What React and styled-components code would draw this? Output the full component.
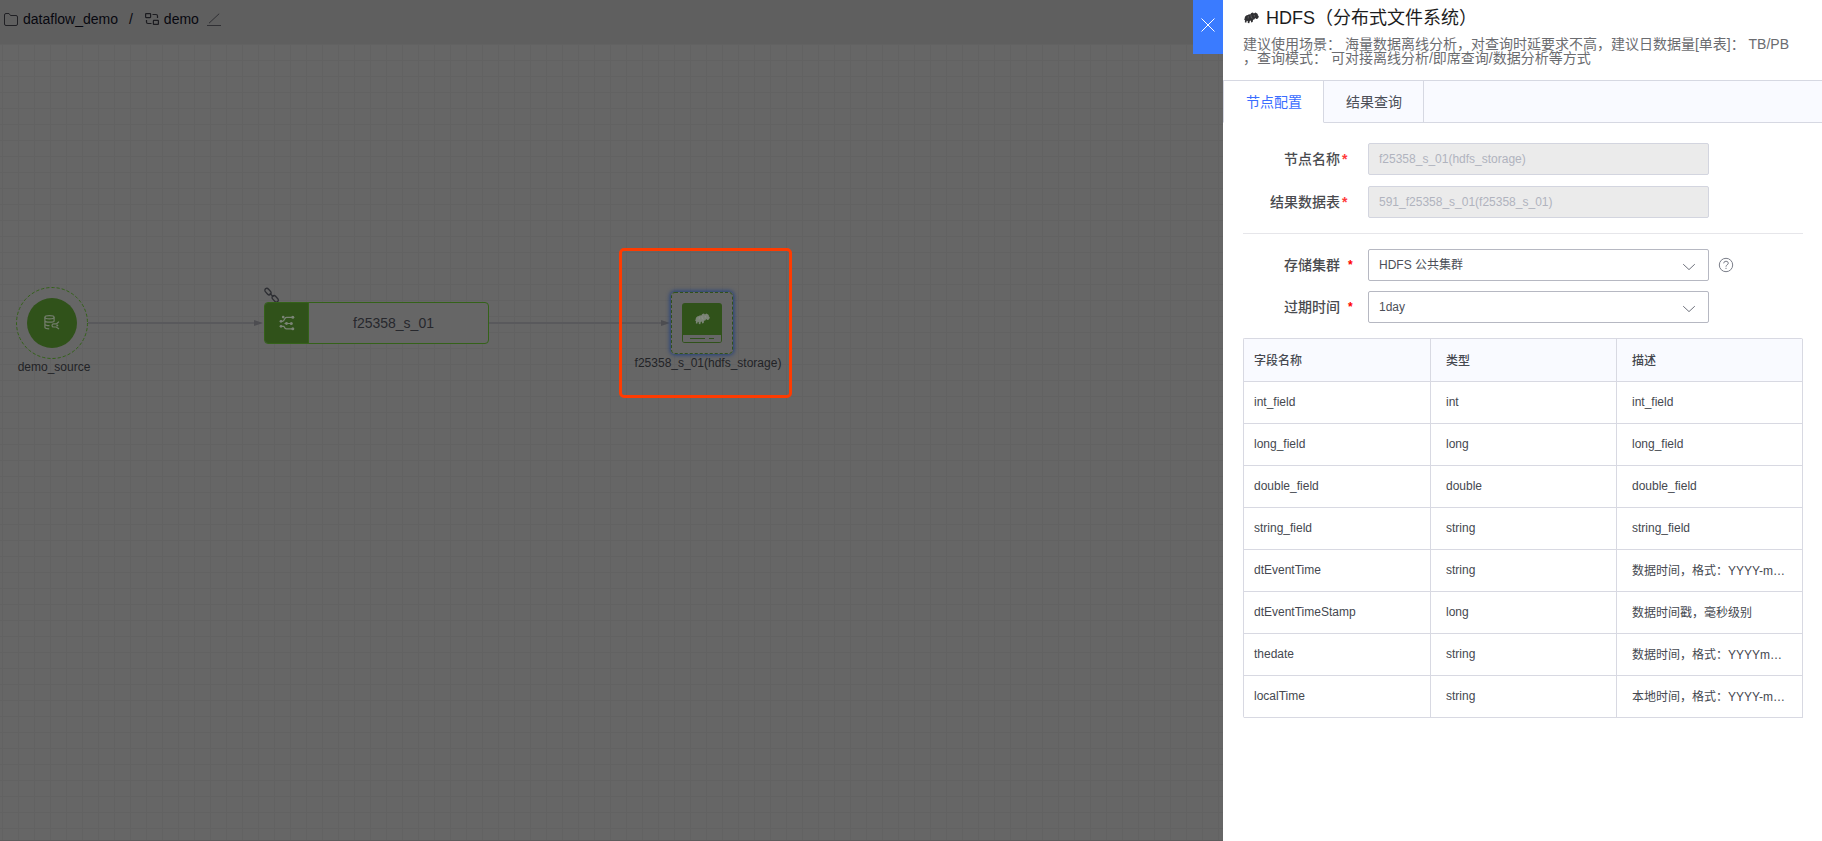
import React from "react";
import styled, { createGlobalStyle } from "styled-components";

const GlobalStyle = createGlobalStyle`
  * { box-sizing: border-box; }
  html, body { margin: 0; padding: 0; }
  body {
    width: 100vw;
    height: 100vh;
    overflow: hidden;
    font-family: "Liberation Sans", "Noto Sans CJK SC", sans-serif;
  }
`;

const Page = styled.div`
  display: flex;
  width: 100vw;
  height: 100vh;
  overflow: hidden;
`;

const Workspace = styled.main`
  flex: 1;
  min-width: 0;
  display: flex;
  flex-direction: column;
  position: relative;
  background: #666;
`;

const TopBar = styled.header`
  height: 44px;
  flex: none;
  display: flex;
  align-items: center;
  padding: 0 0 6px 4px;
  background: #5f5f5f;
  color: #08080f;
  font-size: 14px;
`;

const Crumb = styled.span`
  display: flex;
  align-items: center;
  gap: 5px;
`;

const Slash = styled.span`
  margin: 0 12px 0 11px;
`;

const EditButton = styled.span`
  display: flex;
  margin-left: 8px;
`;

const Canvas = styled.div`
  flex: 1;
  position: relative;
  background-color: #666;
  background-image: linear-gradient(to right, #626262 1px, transparent 1px),
    linear-gradient(to bottom, #626262 1px, transparent 1px);
  background-size: 16px 16px;
  background-position: 2px 0;
  border-bottom: 1px solid #5c5c5c;
`;

const Links = styled.svg`
  position: absolute;
  left: 0;
  top: 0;
`;

const NodeAt = styled.div`
  position: absolute;
  left: ${(p) => p.$x}px;
  top: ${(p) => p.$y}px;
`;

const NodeLabel = styled.div`
  position: absolute;
  top: ${(p) => p.$top}px;
  left: 50%;
  transform: translateX(calc(-50% + ${(p) => p.$shift}px));
  white-space: nowrap;
  font-size: 12px;
  line-height: 16px;
  color: #222326;
`;

const ProcessNode = styled.div`
  display: flex;
  width: 225px;
  height: 42px;
  border: 1px solid #346219;
  border-radius: 4px;
  background: #666;
  overflow: hidden;
`;

const ProcessIcon = styled.div`
  width: 44px;
  display: flex;
  align-items: center;
  justify-content: center;
  background: #30521a;
  border-right: 1px solid #346219;
`;

const ProcessName = styled.div`
  flex: 1;
  padding-right: 10px;
  text-align: center;
  font-size: 14px;
  line-height: 41px;
  color: #27282d;
`;

const StorageNode = styled.div`
  width: 62px;
  height: 62px;
  display: flex;
  border-radius: 4px;
  background: #666;
  box-shadow: 0 0 4px 1px #1d3d7c;
`;

const Highlight = styled.div`
  position: absolute;
  left: 619px;
  top: 204px;
  width: 173px;
  height: 150px;
  border: 3px solid #ff3b00;
  border-radius: 5px;
`;

const CloseButton = styled.button`
  position: absolute;
  right: 0;
  top: 0;
  width: 30px;
  height: 54px;
  padding: 0 0 4px;
  border: 0;
  display: flex;
  align-items: center;
  justify-content: center;
  background: #3a7bff;
  z-index: 2;
`;

const Panel = styled.aside`
  width: 599px;
  flex: none;
  display: flex;
  flex-direction: column;
  background: #fff;
`;

const PanelHead = styled.div`
  height: 80px;
  padding: 5px 20px 0 21px;
`;

const Title = styled.h1`
  display: flex;
  align-items: center;
  gap: 7px;
  margin: 0;
  height: 26px;
  font-size: 18px;
  font-weight: 400;
  line-height: 26px;
  color: #1c1c1c;
`;

const Description = styled.p`
  margin: 6px 0 0 -1px;
  font-size: 14px;
  line-height: 14px;
  white-space: nowrap;
  color: #6b6c70;
`;

const Tabs = styled.div`
  display: flex;
  height: 43px;
  border-top: 1px solid #d6d8e2;
  background: #f9faff;
`;

const Tab = styled.div`
  width: ${(p) => (p.$active ? 101 : 100)}px;
  display: flex;
  align-items: center;
  padding: 0 0 2px 22px;
  border-left: ${(p) => (p.$active ? "1px solid #d6d8e2" : "0")};
  border-right: 1px solid #d6d8e2;
  border-bottom: 1px solid ${(p) => (p.$active ? "#fff" : "#d6d8e2")};
  background: ${(p) => (p.$active ? "#fff" : "#f9faff")};
  color: ${(p) => (p.$active ? "#3a6dff" : "#4c4f58")};
  font-size: 14px;
`;

const TabFill = styled.div`
  flex: 1;
  border-bottom: 1px solid #d6d8e2;
`;

const Form = styled.section`
  display: flex;
  flex-direction: column;
  gap: ${(p) => p.$gap}px;
  margin: 0 19px 0 20px;
  padding: ${(p) => p.$pad};
  border-bottom: ${(p) => (p.$ruled ? "1px solid #e6e6ea" : "0")};
`;

const Row = styled.div`
  display: flex;
  align-items: center;
  height: 32px;
`;

const Label = styled.label`
  width: 97px;
  flex: none;
  text-align: right;
  font-size: 14px;
  font-weight: 500;
  line-height: 20px;
  margin-top: -1px;
  color: #4a4b4f;
`;

const Star = styled.span`
  width: 28px;
  padding-left: ${(p) => (p.$wide ? 8 : 2)}px;
  flex: none;
  font-size: ${(p) => (p.$wide ? 12 : 14)}px;
  line-height: 16px;
  font-weight: 700;
  color: ${(p) => (p.$wide ? "#f00" : "#ff3a3a")};
`;

const Field = styled.div`
  width: 341px;
  height: 32px;
  display: flex;
  align-items: center;
  justify-content: space-between;
  padding: 0 12px 0 10px;
  border: 1px solid ${(p) => (p.$disabled ? "#d3d5df" : "#b6b8c2")};
  border-radius: 2px;
  background: ${(p) => (p.$disabled ? "#ebebeb" : "#fff")};
  color: ${(p) => (p.$disabled ? "#b0b3be" : "#4c4f58")};
  font-size: 12px;
  line-height: 16px;
`;

const ChevronIcon = styled.svg`
  margin-top: 4px;
`;

const HelpIcon = styled.svg`
  margin-left: 9px;
`;

const Table = styled.div`
  display: grid;
  grid-template-columns: 187px 186px 186px;
  grid-template-rows: 43px repeat(8, 42px);
  width: 560px;
  margin: 15px 0 0 20px;
  border-top: 1px solid #d8d9e2;
  border-left: 1px solid #d8d9e2;
  border-radius: 2px;
`;

const Cell = styled.div`
  min-width: 0;
  display: flex;
  align-items: center;
  padding: 0 15px 2px ${(p) => (p.$first ? 10 : 15)}px;
  border-right: 1px solid #d8d9e2;
  border-bottom: 1px solid #d8d9e2;
  background: ${(p) => (p.$head ? "#f9faff" : "#fff")};
  font-size: 12px;
  font-weight: ${(p) => (p.$head ? 500 : 400)};
  color: #45484f;
`;

const CellText = styled.span`
  white-space: nowrap;
`;

const Elephant = ({ color, width, height }) => (
  <svg width={width} height={height} viewBox="0 0 15 12" fill={color}>
    <path d="M.6 6.400C.8 4.500 2 3.300 4 3.100l.9-.9 1.300.2L7.300.9 8.900.6l1 .8 1.500-.8 1.300.6 1 .9.200 1.400.9.600-.4 1.700-.9 1-1.300.200-1-.9-.9 1.300-1.300.300-.3 2.300-1.500.4-.4-1.800-1 .3L5.300 11.200l-1.500-.1-.1-2.200-.9-.2-.6 2-1.400-.4.3-2.100-.9-.3Z" />
    <path d="M4.400 4l-.3 2.500M6.900 3.200l.4 2.600 1.300.5M10.200 3l.3 1.600" fill="none" stroke="#a0a0a0" strokeOpacity=".55" strokeWidth=".7" />
  </svg>
);

const Chevron = () => (
  <ChevronIcon width="14" height="8" viewBox="0 0 14 8">
    <path d="M1.200 1.200 7 6.600l5.800-5.400" fill="none" stroke="#6f727d" strokeWidth="1" />
  </ChevronIcon>
);

const fields = [
  ["int_field", "int", "int_field"],
  ["long_field", "long", "long_field"],
  ["double_field", "double", "double_field"],
  ["string_field", "string", "string_field"],
  ["dtEventTime", "string", "数据时间，格式：YYYY-m…"],
  ["dtEventTimeStamp", "long", "数据时间戳，毫秒级别"],
  ["thedate", "string", "数据时间，格式：YYYYm…"],
  ["localTime", "string", "本地时间，格式：YYYY-m…"],
];

function Header() {
  return (
    <TopBar>
      <Crumb>
        <svg width="14" height="13" viewBox="0 0 14 13" fill="none" stroke="#202024" strokeWidth="1">
          <path d="M.5 11V2Q.5.5 2 .5h3l1.500 2H12q1.500 0 1.500 1.500v7q0 1.500-1.500 1.500H2Q.5 12.500.5 11Z" />
        </svg>
        dataflow_demo
      </Crumb>
      <Slash>/</Slash>
      <Crumb>
        <svg width="14" height="12" viewBox="0 0 14 12" fill="none" stroke="#1c1c20" strokeWidth="1.200">
          <rect x=".6" y=".6" width="5" height="4" rx=".5" />
          <rect x="8.400" y="7.400" width="5" height="4" rx=".5" />
          <path d="M7.500 1.500H11q1.500 0 1.500 1.500v2M1.500 7v2q0 1.500 1.500 1.500h3.500" />
        </svg>
        demo
      </Crumb>
      <EditButton>
        <svg width="14" height="13" viewBox="0 0 14 13" fill="none" stroke="#303034" strokeWidth="1">
          <path d="M2 10.200 12.200.7M0 12.500h14" />
        </svg>
      </EditButton>
    </TopBar>
  );
}

function Flow() {
  return (
    <Canvas>
      <Links width="1223" height="500">
        <g stroke="#59595c" strokeWidth="2">
          <path d="M88 279H256M489 279H663" />
        </g>
        <g fill="#4d4d51">
          <path d="M254 276l9 3-9 3zM661 276l9 3-9 3z" />
        </g>
        <g fill="none" stroke="#2d2e33" strokeWidth="1.300">
          <rect x="-3.700" y="-2" width="7.400" height="4" rx="2" transform="translate(268 247.600) rotate(48)" />
          <rect x="-3.700" y="-2" width="7.400" height="4" rx="2" transform="translate(275.200 254.800) rotate(48)" />
          <path d="M269.800 249.300l3.600 3.600" />
        </g>
      </Links>

      <NodeAt $x={16} $y={243}>
        <svg width="72" height="72" viewBox="0 0 72 72">
          <circle cx="36" cy="36" r="35.500" fill="#666" stroke="#346219" strokeDasharray="3.200 2" />
          <circle cx="36" cy="36" r="25" fill="#30521a" />
          <g fill="none" stroke="#737d6c" strokeWidth="1.200">
            <ellipse cx="33.500" cy="30.300" rx="4.600" ry="1.600" />
            <path d="M28.900 30.300v10q0 1.400 4.300 1.600M38.100 30.300v4.200M28.900 33.700q.5 1.500 4.600 1.500t4.600-1M28.900 37.200q.5 1.400 4.600 1.500" />
            <path d="M43 34.600l-2.500 2.200h-2.800q-1.700 0-1.700 1.600t1.700 1.600h2.600l2.700 2" />
          </g>
          <circle cx="41.300" cy="38.500" r="1" fill="#737d6c" />
        </svg>
        <NodeLabel $top={72} $shift={2}>demo_source</NodeLabel>
      </NodeAt>

      <NodeAt $x={264} $y={258}>
        <ProcessNode>
          <ProcessIcon>
            <svg width="16" height="16" viewBox="0 0 16 16" fill="none" stroke="#7b8476" strokeWidth="1.200">
              <path d="M2.300 6.300h1q1.500 0 2.200-2t2-2h6M5.500 8.500h7M2.300 11.300h2.500q1 2.500 2.500 2.500h6" />
              <g fill="#7b8476" stroke="none">
                <circle cx="4.200" cy="2.100" r="1.300" />
                <circle cx="2" cy="6.300" r="1.400" />
                <circle cx="13.800" cy="2.300" r="1.500" />
                <circle cx="7.500" cy="8.500" r="1.400" />
                <circle cx="12.300" cy="8.500" r="1.500" />
                <circle cx="2" cy="11.300" r="1.400" />
                <circle cx="13.800" cy="13.800" r="1.500" />
              </g>
            </svg>
          </ProcessIcon>
          <ProcessName>f25358_s_01</ProcessName>
        </ProcessNode>
      </NodeAt>

      <NodeAt $x={671} $y={248}>
        <StorageNode>
          <svg width="62" height="62" viewBox="0 0 62 62">
            <rect x=".5" y=".5" width="61" height="61" rx="3.500" fill="none" stroke="#30521a" strokeDasharray="3 2" />
            <rect x="11" y="11" width="40" height="40" rx="3" fill="#30521a" />
            <path d="M12 43h38v6q0 1-1 1H13q-1 0-1-1Z" fill="#666" />
            <path d="M19 46.500h15M38 46.500h5" stroke="#30521a" />
            <svg x="24" y="21" width="15" height="12">
              <Elephant color="#7b8476" width={15} height={12} />
            </svg>
          </svg>
        </StorageNode>
        <NodeLabel $top={63} $shift={6}>f25358_s_01(hdfs_storage)</NodeLabel>
      </NodeAt>

      <Highlight />
    </Canvas>
  );
}

export default function App() {
  return (
    <Page>
      <GlobalStyle />
      <Workspace>
        <Header />
        <Flow />
        <CloseButton aria-label="关闭">
          <svg width="16" height="16" viewBox="0 0 16 16">
            <path d="M1.500 1.500l13 13M14.500 1.500l-13 13" stroke="#fff" strokeWidth="1" fill="none" />
          </svg>
        </CloseButton>
      </Workspace>

      <Panel>
        <PanelHead>
          <Title>
            <Elephant color="#303033" width={15} height={12} />
            HDFS（分布式文件系统）
          </Title>
          <Description>
            建议使用场景： 海量数据离线分析，对查询时延要求不高，建议日数据量[单表]： TB/PB
            <br />
            ，查询模式： 可对接离线分析/即席查询/数据分析等方式
          </Description>
        </PanelHead>

        <Tabs>
          <Tab $active>节点配置</Tab>
          <Tab>结果查询</Tab>
          <TabFill />
        </Tabs>

        <Form $gap={11} $pad="20px 0 15px" $ruled>
          <Row>
            <Label>节点名称</Label>
            <Star>*</Star>
            <Field $disabled>f25358_s_01(hdfs_storage)</Field>
          </Row>
          <Row>
            <Label>结果数据表</Label>
            <Star>*</Star>
            <Field $disabled>591_f25358_s_01(f25358_s_01)</Field>
          </Row>
        </Form>

        <Form $gap={10} $pad="15px 0 0">
          <Row>
            <Label>存储集群</Label>
            <Star $wide>*</Star>
            <Field>
              HDFS 公共集群
              <Chevron />
            </Field>
            <HelpIcon width="16" height="16" viewBox="0 0 16 16" fill="none" stroke="#7b7e89">
              <circle cx="8" cy="8" r="6.700" />
              <path d="M5.700 6.300Q5.800 4.200 8 4.200t2.300 1.900q0 1.100-1.200 1.800T8 9.700M8 10.800v1.200" />
            </HelpIcon>
          </Row>
          <Row>
            <Label>过期时间</Label>
            <Star $wide>*</Star>
            <Field>
              1day
              <Chevron />
            </Field>
          </Row>
        </Form>

        <Table>
          {["字段名称", "类型", "描述"].map((name, i) => (
            <Cell key={name} $head $first={i === 0}>
              {name}
            </Cell>
          ))}
          {fields.map((row) =>
            row.map((text, i) => (
              <Cell key={row[0] + i} $first={i === 0}>
                <CellText>{text}</CellText>
              </Cell>
            ))
          )}
        </Table>
      </Panel>
    </Page>
  );
}
